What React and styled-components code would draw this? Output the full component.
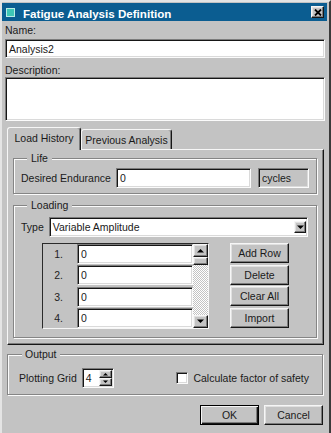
import React from 'react'
import styled, { createGlobalStyle, css } from 'styled-components'

const face = '#c3c3c3'

const sunken = css`
  border: 1px solid;
  border-color: #7c7c7c #fbfbfb #fbfbfb #7c7c7c;
  box-shadow: inset 1px 1px 0 #161616, inset -1px -1px 0 #dadada;
`
const raised = css`
  border: 1px solid;
  border-color: #f6f6f6 #161616 #161616 #f6f6f6;
  box-shadow: inset -1px -1px 0 #7c7c7c, inset 1px 1px 0 #e0e0e0;
  background: ${face};
`

const GlobalStyle = createGlobalStyle`
  * { box-sizing: border-box; }
  body {
    margin: 0;
    background: ${face};
    font-family: "Liberation Sans", Arial, sans-serif;
    font-size: 10.5px;
    color: #1a1a1a;
  }
`

const Window = styled.div`
  width: 331px;
  height: 433px;
  overflow: hidden;
  background: ${face};
  border-style: solid;
  border-width: 2px 2px 0 2px;
  border-color: #e4e4e4 #3a3a3a #3a3a3a #e4e4e4;
  padding-top: 1px;
`
const TitleBar = styled.div`
  display: flex;
  align-items: center;
  height: 18px;
  margin-right: 2px;
  padding: 0 3px 0 4px;
  background: #0b5d91;
  color: #fff;
`
const AppIcon = styled.span`
  width: 9px;
  height: 9px;
  background: #3ec6b6;
  border: 1px solid #b8ece4;
  margin-right: 8px;
`
const Caption = styled.span`
  flex: 1;
  font-weight: bold;
  font-size: 11.6px;
  padding-top: 2px;
`
const CloseButton = styled.span`
  ${raised};
  width: 13px;
  height: 12px;
  display: flex;
  align-items: center;
  justify-content: center;
`
const Body = styled.div`
  padding: 0 4px 0 3px;
`
const Label = styled.div`
  line-height: 13px;
  margin-top: ${p => p.$top || 0}px;
`
const Text = styled.span`
  white-space: nowrap;
  flex: none;
`
const Field = styled.div`
  ${sunken};
  background: ${p => (p.$gray ? face : '#fff')};
  height: ${p => p.$h || 19}px;
  width: ${p => (p.$w ? `${p.$w}px` : 'auto')};
  flex: none;
  margin-top: ${p => p.$top || 0}px;
  margin-left: ${p => p.$left || 0}px;
  padding: 0 3px;
  display: flex;
  align-items: ${p => (p.$multi ? 'flex-start' : 'center')};
  white-space: nowrap;
`
const TabStrip = styled.div`
  display: flex;
  align-items: flex-end;
  height: 22px;
  margin-top: 6px;
  padding-left: 2px;
`
const Tab = styled.div`
  position: relative;
  z-index: ${p => (p.$active ? 1 : 0)};
  width: ${p => p.$w}px;
  height: ${p => (p.$active ? 23 : 20)}px;
  margin-bottom: ${p => (p.$active ? -1 : 0)}px;
  padding-top: 4px;
  text-align: center;
  white-space: nowrap;
  line-height: 13px;
  background: ${face};
  border: 1px solid;
  border-bottom: none;
  border-color: #f6f6f6 #161616 transparent #f6f6f6;
  border-radius: 3px 3px 0 0;
  box-shadow: inset -1px 0 0 #7c7c7c;
`
const Panel = styled.div`
  margin: 0 1px 0 2px;
  padding: 2px 6px 6px 5px;
  border: 1px solid;
  border-color: #f6f6f6 #161616 #161616 #f6f6f6;
  box-shadow: inset -1px -1px 0 #7c7c7c;
`
const Group = styled.fieldset`
  margin: ${p => p.$margin || 0};
  padding: ${p => p.$pad};
  min-width: 0;
  border: 1px solid #858585;
  box-shadow: inset 1px 1px 0 #fbfbfb, 1px 1px 0 #fbfbfb;
`
const Legend = styled.legend`
  margin-left: ${p => p.$left}px;
  padding: 0 ${p => p.$pad || 4}px;
  line-height: 13px;
  background: ${face};
`
const Row = styled.div`
  display: flex;
  align-items: center;
`
const Select = styled(Field)`
  flex: 1;
  margin-left: 5px;
  padding-right: 1px;
  justify-content: space-between;
`
const ArrowBox = styled.span`
  ${raised};
  width: ${p => p.$w || 12}px;
  height: ${p => p.$h || 12}px;
  flex: none;
  display: flex;
  align-items: center;
  justify-content: center;
`
const ListArea = styled.div`
  display: flex;
  align-items: flex-start;
  margin-top: 6px;
  padding-left: 21px;
  gap: 21px;
`
const ListPanel = styled.div`
  display: flex;
  width: 167px;
  height: 86px;
  border: 1px solid;
  border-color: #2a2a2a #f6f6f6 #f6f6f6 #2a2a2a;
`
const Rows = styled.div`
  flex: 1;
  display: grid;
  grid-template-columns: 34px 1fr;
  grid-auto-rows: 20px;
  row-gap: 1.33px;
`
const RowNum = styled.div`
  text-align: right;
  padding-right: 14px;
  line-height: 20px;
  color: #222;
`
const Scrollbar = styled.div`
  width: 15px;
  display: flex;
  flex-direction: column;
  background-color: #fff;
  background-image: repeating-conic-gradient(${face} 0 25%, #fff 0 50%);
  background-size: 2px 2px;
`
const Track = styled.div`
  flex: 1;
`
const ButtonStack = styled.div`
  display: flex;
  flex-direction: column;
  gap: 1.5px;
`
const Button = styled.div`
  ${raised};
  width: 59px;
  height: 20px;
  display: flex;
  align-items: center;
  justify-content: center;
  ${p =>
    p.$default &&
    css`
      border-color: #000;
      box-shadow: inset 1px 1px 0 #f6f6f6, inset -1px -1px 0 #161616, inset -2px -2px 0 #7c7c7c;
    `}
`
const Spinner = styled.div`
  ${sunken};
  display: flex;
  width: 32px;
  height: 20px;
  margin-left: 5px;
  background: #fff;
`
const SpinValue = styled.span`
  flex: 1;
  padding-left: 3px;
  line-height: 18px;
`
const SpinButtons = styled.div`
  display: flex;
  flex-direction: column;
  padding: 1px 1px 1px 0;
`
const Check = styled.label`
  display: flex;
  align-items: center;
  gap: 5px;
  margin-left: auto;
  white-space: nowrap;
`
const CheckBox = styled.span`
  ${sunken};
  width: 12px;
  height: 12px;
  background: #fff;
`
const Footer = styled.div`
  display: flex;
  justify-content: flex-end;
  gap: 5px;
  margin: 10px 2px 0 0;
`

const Arrow = ({ up, size = 7 }) => (
  <svg width={size} height={Math.ceil(size / 2) + 1} viewBox="0 0 7 4">
    <polygon points={up ? '0,4 7,4 3.5,0.5' : '0,0 7,0 3.5,3.5'} fill="#000" />
  </svg>
)

const rows = ['0', '0', '0', '0']

export default function App() {
  return (
    <Window>
      <GlobalStyle />
      <TitleBar>
        <AppIcon />
        <Caption>Fatigue Analysis Definition</Caption>
        <CloseButton>
          <svg width="8" height="7" viewBox="0 0 8 7">
            <path d="M1 0.5 L7 6.5 M7 0.5 L1 6.5" stroke="#000" strokeWidth="1.8" />
          </svg>
        </CloseButton>
      </TitleBar>
      <Body>
        <Label $top={3}>Name:</Label>
        <Field $top={2}>Analysis2</Field>
        <Label $top={6}>Description:</Label>
        <Field $h={44} $multi />
        <TabStrip>
          <Tab $active $w={74}>Load History</Tab>
          <Tab $w={91}>Previous Analysis</Tab>
        </TabStrip>
        <Panel>
          <Group $pad="3px 8px 5px 7px">
            <Legend $left={6}>Life</Legend>
            <Row>
              <Text>Desired Endurance</Text>
              <Field $w={135} $h={20} $left={5}>0</Field>
              <Field $w={51} $h={20} $left={7} $gray>cycles</Field>
            </Row>
          </Group>
          <Group $margin="5px 0 0" $pad="5px 8px 8px 7px">
            <Legend $left={6}>Loading</Legend>
            <Row>
              <Text>Type</Text>
              <Select $h={20}>
                <span>Variable Amplitude</span>
                <ArrowBox>
                  <Arrow />
                </ArrowBox>
              </Select>
            </Row>
            <ListArea>
              <ListPanel>
                <Rows>
                  {rows.map((v, i) => (
                    <React.Fragment key={i}>
                      <RowNum>{i + 1}.</RowNum>
                      <Field $h={20}>{v}</Field>
                    </React.Fragment>
                  ))}
                </Rows>
                <Scrollbar>
                  <ArrowBox $w={15} $h={13}>
                    <Arrow up />
                  </ArrowBox>
                  <ArrowBox $w={15} $h={8} />
                  <Track />
                  <ArrowBox $w={15} $h={13}>
                    <Arrow />
                  </ArrowBox>
                </Scrollbar>
              </ListPanel>
              <ButtonStack>
                <Button>Add Row</Button>
                <Button>Delete</Button>
                <Button>Clear All</Button>
                <Button>Import</Button>
              </ButtonStack>
            </ListArea>
          </Group>
        </Panel>
        <Group $margin="3px 2px 0" $pad="7px 13px 6px 11px">
          <Legend $left={3} $pad={3}>Output</Legend>
          <Row>
            <Text>Plotting Grid</Text>
            <Spinner>
              <SpinValue>4</SpinValue>
              <SpinButtons>
                <ArrowBox $w={13} $h={8}>
                  <Arrow up size={5} />
                </ArrowBox>
                <ArrowBox $w={13} $h={8}>
                  <Arrow size={5} />
                </ArrowBox>
              </SpinButtons>
            </Spinner>
            <Check>
              <CheckBox />
              Calculate factor of safety
            </Check>
          </Row>
        </Group>
        <Footer>
          <Button $default>OK</Button>
          <Button>Cancel</Button>
        </Footer>
      </Body>
    </Window>
  )
}
